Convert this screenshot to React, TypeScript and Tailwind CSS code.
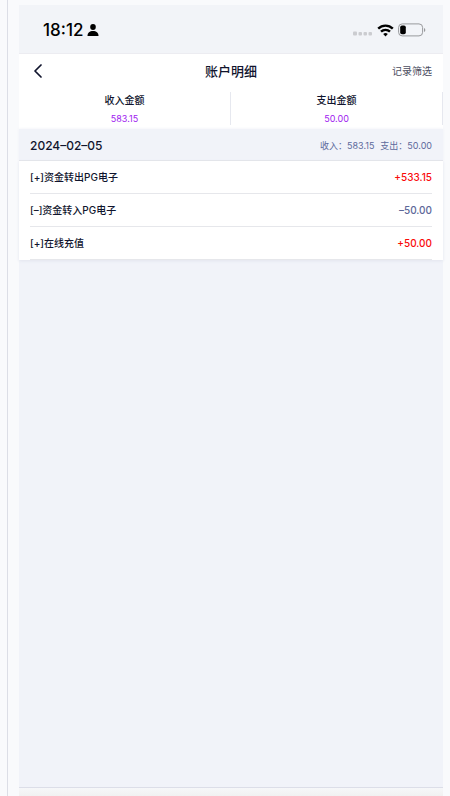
type Entry = {
  id: number;
  title: string;
  amount: string;
  income: boolean;
};

const entries: Entry[] = [
  { id: 1, title: '[+]资金转出PG电子', amount: '+533.15', income: true },
  { id: 2, title: '[–]资金转入PG电子', amount: '–50.00', income: false },
  { id: 3, title: '[+]在线充值', amount: '+50.00', income: true },
];

const totals = [
  { label: '收入金额', value: '583.15' },
  { label: '支出金额', value: '50.00' },
];

function StatusBar() {
  return (
    <div className="flex h-[49px] items-center justify-between border-b border-[#ececf1] bg-[#f2f4f8] pl-6 pr-[17px] pt-[2px] text-black">
      <div className="flex items-center gap-1">
        <span className="text-[17px] leading-5 font-medium">18:12</span>
        <svg width="12" height="12" viewBox="0 0 12 12" fill="currentColor" aria-hidden="true">
          <ellipse cx="6" cy="3" rx="2.8" ry="3" />
          <path d="M0.5 12c0-3.200 2.200-5 5.500-5s5.500 1.800 5.500 5z" />
        </svg>
      </div>
      <div className="flex items-center gap-1">
        <svg width="20" height="14" viewBox="0 0 20 14" fill="#cbccd0" aria-hidden="true">
          <rect x="0" y="8.500" width="4" height="4" rx="1" />
          <rect x="5.500" y="9" width="3.500" height="3.500" rx="1" />
          <rect x="10.500" y="9" width="3.500" height="3.500" rx="1" />
          <rect x="15.500" y="9" width="3.500" height="3.500" rx="1" />
        </svg>
        <svg width="17" height="13" viewBox="0 0 17 13" fill="none" stroke="currentColor" strokeWidth="2.400" aria-hidden="true">
          <path d="M1.200 4.600a10.400 10.400 0 0 1 14.600 0" />
          <path d="M4 7.700a6.400 6.400 0 0 1 9 0" />
          <path d="M6.200 10.100a3.200 3.200 0 0 1 4.600 0l-2.300 2.400z" fill="currentColor" stroke="none" />
        </svg>
        <svg width="28" height="14" viewBox="0 0 28 14" aria-hidden="true">
          <rect x="0.600" y="0.900" width="24" height="12" rx="3.600" fill="none" stroke="#98999c" />
          <rect x="2.200" y="2.500" width="5.600" height="8.800" rx="1.800" fill="#000" />
          <path d="M26 5c1.800 0.600 1.800 3.400 0 4z" fill="#98999c" />
        </svg>
      </div>
    </div>
  );
}

export default function App() {
  return (
    <div className="flex min-h-screen bg-[#f9fafc] pr-[7px] font-['Inter','Noto_Sans_CJK_SC',sans-serif] text-[#10142d]">
      <div className="w-2 shrink-0 border-r border-[#dcdee6]" />
      <div className="ml-[11px] mt-[5px] flex min-w-0 flex-1 flex-col bg-[#f1f3f9]">
        <StatusBar />

        <header className="grid h-[34px] grid-cols-[1fr_auto_1fr] items-center bg-white px-[11px]">
          <button type="button" aria-label="返回" className="justify-self-start px-1">
            <svg width="8" height="14" viewBox="0 0 8 14" fill="none" stroke="currentColor" strokeWidth="1.700" strokeLinecap="round" strokeLinejoin="round" aria-hidden="true">
              <path d="M7 1L1 7l6 6" />
            </svg>
          </button>
          <h1 className="text-[13px] leading-4 font-medium">账户明细</h1>
          <button type="button" className="justify-self-end text-[10px] leading-4 text-[#4b4d60]">记录筛选</button>
        </header>

        {/* Totals */}
        <section className="flex bg-white pt-1 pb-1">
          {totals.map((item) => (
            <div key={item.label} className="flex h-[33px] flex-1 flex-col items-center justify-between border-r border-[#e6e8ef]">
              <p className="text-[10px] leading-4 font-medium">{item.label}</p>
              <p className="text-[9px] leading-3 text-[#a020f0]">{item.value}</p>
            </div>
          ))}
        </section>

        {/* Daily records */}
        <section>
          <div className="flex h-8 items-center justify-between border-b border-[#e4e5ea] px-[11px] pt-[2px] shadow-[0_0_3px_#eef0f6]">
            <h2 className="text-[12px] leading-4 font-medium">2024–02–05</h2>
            <p className="flex gap-1.5 text-[9px] leading-4 text-[#5d6a9c]">
              <span>收入：583.15</span>
              <span>支出：50.00</span>
            </p>
          </div>
          <ul className="bg-white px-[11px] shadow-[0_1px_3px_#e2e4ee]">
            {entries.map((entry) => (
              <li key={entry.id} className="flex h-[33px] items-center justify-between border-b border-[#e6e7eb] text-[10px] leading-4 font-medium">
                <span>{entry.title}</span>
                <span className={entry.income ? 'text-[#fa0a0a]' : 'text-[#5d6799]'}>{entry.amount}</span>
              </li>
            ))}
          </ul>
        </section>

        <footer className="mt-auto h-[9px] border-t border-[#dcdee8] bg-linear-to-b from-[#f6f7f9] to-[#f1f1f1]" />
      </div>
    </div>
  );
}
